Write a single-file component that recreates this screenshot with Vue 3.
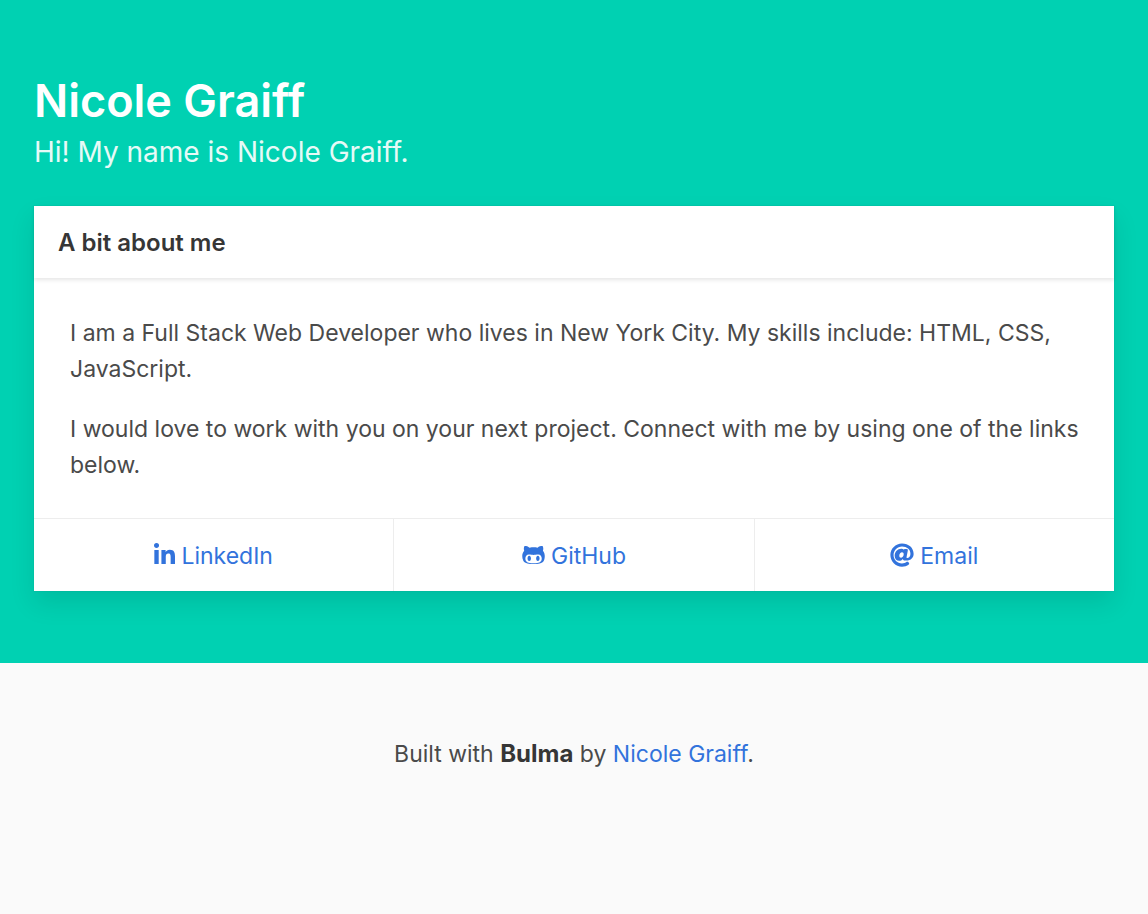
<script setup>
const links = [
  { label: 'LinkedIn', width: 21, box: '0 0 448 512', d: 'M100.3 448H7.4V148.9h92.9zM53.8 108.1C24.1 108.1 0 83.5 0 53.8a53.8 53.8 0 0 1 107.6 0c0 29.7-24.1 54.3-53.8 54.3zM447.9 448h-92.7V302.4c0-34.7-.7-79.2-48.3-79.2-48.3 0-55.7 37.7-55.7 76.7V448h-92.8V148.9h89.1v40.8h1.3c12.4-23.5 42.7-48.3 87.9-48.3 94 0 111.3 61.9 111.3 142.3V448z' },
  { label: 'GitHub', width: 23, box: '0 0 480 512', d: 'M186.1 328.7c0 20.9-10.9 55.1-36.7 55.1s-36.7-34.2-36.7-55.1 10.9-55.1 36.7-55.1 36.7 34.2 36.7 55.1zM480 278.2c0 31.9-3.2 65.7-17.5 95-37.9 76.6-142.1 74.8-216.7 74.8-75.8 0-186.2 2.7-225.6-74.8-14.6-29-20.2-63.1-20.2-95 0-41.9 13.9-81.5 41.5-113.6-5.2-15.8-7.7-32.4-7.7-48.8 0-21.5 4.9-32.3 14.6-51.8 45.3 0 74.3 9 108.8 36 29-6.9 58.8-10 88.7-10 27 0 54.2 2.9 80.4 9.2 34-26.7 63-35.2 107.8-35.2 9.8 19.5 14.6 30.3 14.6 51.8 0 16.4-2.6 32.7-7.7 48.2 27.5 32.4 39 72.3 39 114.2zm-64.3 50.5c0-43.9-26.7-82.6-73.5-82.6-18.9 0-37 3.4-56 6-14.9 2.3-29.8 3.2-45.1 3.2-15.2 0-30.1-.9-45.1-3.2-18.7-2.6-37-6-56-6-46.8 0-73.5 38.7-73.5 82.6 0 87.8 80.4 101.3 150.4 101.3h48.2c70.3 0 150.6-13.4 150.6-101.3zm-82.6-55.1c-25.8 0-36.7 34.2-36.7 55.1s10.9 55.1 36.7 55.1 36.7-34.2 36.7-55.1-10.9-55.1-36.7-55.1z' },
  { label: 'Email', width: 24, box: '0 0 512 512', d: 'M256 8C118.9 8 8 118.9 8 256s110.9 248 248 248c52.1 0 103.7-17 144.8-47.6 10.2-7.6 12-22.2 4-32.1l-15.3-18.4c-7.7-9.2-21.2-10.7-30.9-3.6C328.9 424.5 292.6 436 256 436c-99.3 0-180-80.7-180-180S156.7 76 256 76c104 0 180 60.9 180 156 0 58.1-36.9 87.7-66.8 87.7-17.2 0-17.9-11.9-14.5-28.7l25.7-132c2.9-14.8-8.5-28.6-23.6-28.6h-45a13.5 13.5 0 0 0-13.4 12.1c-14.8-17.9-40.2-21.7-60-21.7-75.3 0-138.9 63.1-138.9 152 0 66.1 37.5 107.7 97.7 107.7 27.4 0 58-15.8 76.2-40.7 9.8 34.2 40.5 34.2 70.3 34.2C451.5 374 504 303.2 504 232 504 95.6 393.9 8 256 8zm-21.7 304.4c-22.2 0-36.2-15.6-36.2-40.8 0-45 30.8-72.7 58.6-72.7 22.3 0 35.6 15.2 35.6 40.8 0 45.1-33.5 72.7-58 72.7z' },
]
</script>

<template>
  <div class="page">
    <section class="hero">
      <h1>Nicole Graiff</h1>
      <h2>Hi! My name is Nicole Graiff.</h2>
      <article class="card">
        <header>A bit about me</header>
        <div class="content">
          <p>I am a Full Stack Web Developer who lives in New York City. My skills include: HTML, CSS, JavaScript.</p>
          <p>I would love to work with you on your next project. Connect with me by using one of the links below.</p>
        </div>
        <nav>
          <a v-for="link in links" :key="link.label" href="#">
            <svg :width="link.width" height="24" :viewBox="link.box" aria-hidden="true"><path :d="link.d" /></svg>
            <span>{{ link.label }}</span>
          </a>
        </nav>
      </article>
    </section>
    <footer>
      <p>Built with <strong>Bulma</strong> by <a href="#">Nicole Graiff</a>.</p>
    </footer>
  </div>
</template>

<style>
body { margin: 0; background: #fafafa; }
</style>

<style scoped>
.page { color: #4a4a4a; font: 23px/36px Inter, "Liberation Sans", sans-serif; }
.hero { background: #00d1b2; padding: 72px 34px; }
h1 { margin: 0; color: #fff; font-size: 45px; line-height: 58px; font-weight: 600; }
h2 { margin: 0 0 32px; color: #e6faf7; font-size: 28px; line-height: 44px; font-weight: 400; }
.card { background: #fff; box-shadow: 0 12px 24px rgba(10, 10, 10, .1), 0 0 0 1px rgba(10, 10, 10, .02); }
header { padding: 19px 24px 17px; color: #363636; font-size: 24px; font-weight: 600; box-shadow: 0 2px 4px rgba(10, 10, 10, .1); }
.content { padding: 37px 34px 35px 36px; }
p { margin: 0; }
p + p { margin-top: 24px; }
nav { display: flex; border-top: 1px solid #ededed; }
nav a { flex: 1; display: flex; align-items: center; justify-content: center; gap: 6px; padding: 19px 18px 17px; }
nav a + a { border-left: 1px solid #ededed; }
svg { fill: currentColor; margin-bottom: 2px; }
a { color: #3273dc; text-decoration: none; }
strong { color: #363636; font-size: 24px; font-weight: 700; }
footer { padding: 73px 36px 144px; background: #fafafa; text-align: center; }
</style>
